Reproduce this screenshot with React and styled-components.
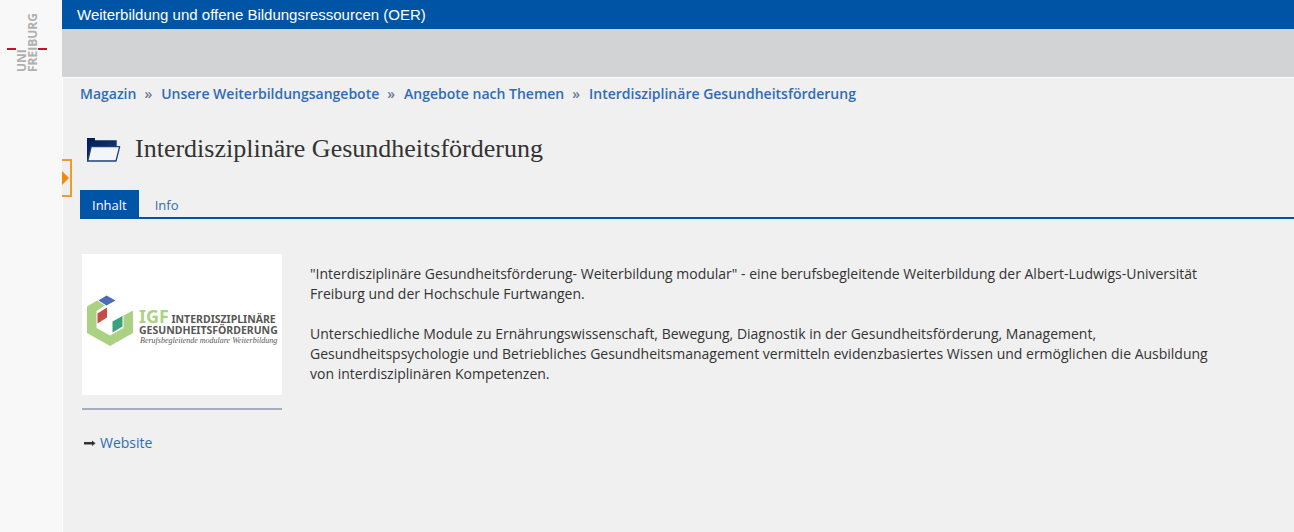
import React from "react";
import styled, { createGlobalStyle } from "styled-components";

const GlobalStyle = createGlobalStyle`
  *, *::before, *::after {
    box-sizing: border-box;
  }

  body {
    margin: 0;
    background: #f0f0f0;
    color: #333;
    font-family: "Open Sans", "Noto Sans", sans-serif;
    font-size: 14px;
    line-height: 20px;
  }
`;

const Page = styled.div`
  display: grid;
  grid-template-columns: 62px minmax(0, 1fr);
  min-height: 100vh;
`;

const Sidebar = styled.aside`
  display: flex;
  justify-content: center;
  align-items: flex-start;
  padding: 12px 6px 0 0;
  background: #f8f8f8;
`;

const TopBar = styled.header`
  padding: 5px 15px 4px;
  background: #0054a6;
  color: #fff;
  font-family: "Liberation Sans", Arial, sans-serif;
  font-size: 15px;
`;

const SubBar = styled.div`
  height: 49px;
  border-bottom: 1px solid #fff;
  background: #d1d3d4;
`;

const Main = styled.main`
  position: relative;
  flex: 1;
  padding: 6px 0 24px 17px;
  border-left: 1px solid #fff;
`;

const Content = styled.div`
  display: flex;
  flex-direction: column;
`;

const Link = styled.a`
  color: #2f6bb8;
  text-decoration: none;

  &:hover {
    text-decoration: underline;
  }
`;

const Breadcrumb = styled.ol`
  display: flex;
  flex-wrap: wrap;
  margin: 0;
  padding: 0;
  list-style: none;
  font-weight: 600;

  li + li::before {
    content: "»";
    padding: 0 9px 0 8px;
    color: #6b7a90;
  }
`;

const TitleRow = styled.div`
  display: flex;
  align-items: center;
  gap: 14px;
  padding: 29px 0 25px 6px;
`;

const Title = styled.h1`
  margin: 0;
  font-family: "Liberation Serif", "Times New Roman", serif;
  font-size: 26px;
  font-weight: 400;
  line-height: 32px;
`;

const Tabs = styled.nav`
  display: flex;
  gap: 4px;
  border-bottom: 2px solid #0054a6;
  font-size: 13px;
`;

const Tab = styled.a`
  padding: 5px 12px 2px;
  background: ${({ $active }) => ($active ? "#0054a6" : "transparent")};
  color: ${({ $active }) => ($active ? "#fff" : "#2f6bb8")};
  text-decoration: none;
`;

const Columns = styled.div`
  display: flex;
  align-items: flex-start;
  gap: 28px;
  padding: 35px 84px 0 2px;
`;

const SideColumn = styled.div`
  flex: 0 0 200px;
`;

const LogoCard = styled.div`
  display: flex;
  height: 141px;
  background: #fff;
`;

const Divider = styled.hr`
  height: 2px;
  margin: 13px 0 23px;
  border: 0;
  background: #a3b0c4;
`;

const WebsiteRow = styled.div`
  display: flex;
  align-items: center;
  gap: 4px;
  padding-left: 1px;
`;

const Text = styled.div`
  flex: 1;
  padding-top: 10px;

  p {
    margin: 0 0 20px;
  }
`;

const Opener = styled.button`
  position: absolute;
  top: 81px;
  left: -1px;
  display: flex;
  align-items: center;
  width: 10px;
  height: 38px;
  padding: 0;
  border: 2px solid #ef9a2d;
  border-left: 0;
  background: #efefef;
  cursor: pointer;
`;

const UniLogo = () => (
  <svg width="42" height="62" viewBox="0 0 42 62" role="img" aria-label="Uni Freiburg">
    <g
      fill="#b0b0b0"
      fontFamily="'Open Sans', sans-serif"
      fontWeight="700"
      fontSize="12"
    >
      <text transform="translate(19 60) rotate(-90)">UNI</text>
      <text transform="translate(30 60) rotate(-90)">FREIBURG</text>
    </g>
    <path d="M0 37h9M31 37h9" stroke="#c70e2c" strokeWidth="2" />
  </svg>
);

const FolderIcon = () => (
  <svg width="35" height="26" viewBox="0 0 35 26" aria-hidden="true">
    <defs>
      <linearGradient id="folder" x1="0" x2="1" y1="0" y2="1">
        <stop offset="0" stopColor="#001f52" />
        <stop offset="1" stopColor="#173f86" />
      </linearGradient>
    </defs>
    <path d="M1 2h8v2.300h21.700V11H6L2 25.500H1z" fill="url(#folder)" />
    <path
      d="M5.200 10.700H33.700L30 25H1.700z"
      fill="#f4f5f8"
      stroke="#1d3f7c"
      strokeWidth="1.300"
      strokeLinejoin="round"
    />
  </svg>
);

const IgfLogo = () => (
  <svg width="200" height="141" viewBox="0 0 400 282" role="img" aria-label="IGF Logo">
    <path
      d="M10 105L30 93L46 103L29 114V148L56 163L83 148V123L102 113V158L56 184L10 158Z"
      fill="#abd283"
    />
    <path d="M33 93L49 83L67 93L49 103Z" fill="#4d6cb5" />
    <path d="M31 119L50 107V127L31 139Z" fill="#c74a48" />
    <path d="M61 135L81 124V145L61 157Z" fill="#38a27a" />
    <g fontFamily="'Noto Sans', sans-serif" fontWeight="700" fill="#575756">
      <text x="114" y="137" fontSize="36" fill="#abd283">IGF</text>
      <text x="179" y="137" fontSize="21">INTERDISZIPLINÄRE</text>
      <text x="114" y="160" fontSize="21">GESUNDHEITSFÖRDERUNG</text>
    </g>
    <text
      x="116"
      y="178"
      fontFamily="'Liberation Serif', serif"
      fontStyle="italic"
      fontSize="16"
      fill="#575756"
    >
      Berufsbegleitende modulare Weiterbildung
    </text>
  </svg>
);

const ArrowIcon = () => (
  <svg width="13" height="8" viewBox="0 0 13 8" aria-hidden="true">
    <path d="M1 3h8V1.500l3.500 2.700L9 7V5.500H1z" fill="#333" />
  </svg>
);

const crumbs = [
  "Magazin",
  "Unsere Weiterbildungsangebote",
  "Angebote nach Themen",
  "Interdisziplinäre Gesundheitsförderung",
];

function App() {
  return (
    <>
      <GlobalStyle />
      <Page>
        <Sidebar>
          <UniLogo />
        </Sidebar>
        <Content>
          <TopBar>Weiterbildung und offene Bildungsressourcen (OER)</TopBar>
          <SubBar />
          <Main>
            <Opener type="button" aria-label="Navigation">
              <svg width="8" height="14" viewBox="0 0 8 14" aria-hidden="true">
                <path d="M0 0l7 7-7 7z" fill="#ee8a0c" />
              </svg>
            </Opener>
            <Breadcrumb>
              {crumbs.map((crumb) => (
                <li key={crumb}>
                  <Link href="#">{crumb}</Link>
                </li>
              ))}
            </Breadcrumb>
            <TitleRow>
              <FolderIcon />
              <Title>Interdisziplinäre Gesundheitsförderung</Title>
            </TitleRow>
            <Tabs>
              <Tab href="#" $active>
                Inhalt
              </Tab>
              <Tab href="#">Info</Tab>
            </Tabs>
            <Columns>
              <SideColumn>
                <LogoCard>
                  <IgfLogo />
                </LogoCard>
                <Divider />
                <WebsiteRow>
                  <ArrowIcon />
                  <Link href="#">Website</Link>
                </WebsiteRow>
              </SideColumn>
              <Text>
                <p>
                  "Interdisziplinäre Gesundheitsförderung- Weiterbildung modular" - eine
                  berufsbegleitende Weiterbildung der Albert-Ludwigs-Universität Freiburg und
                  der Hochschule Furtwangen.
                </p>
                <p>
                  Unterschiedliche Module zu Ernährungswissenschaft, Bewegung, Diagnostik in der
                  Gesundheitsförderung, Management, Gesundheitspsychologie und Betriebliches
                  Gesundheitsmanagement vermitteln evidenzbasiertes Wissen und ermöglichen die
                  Ausbildung von interdisziplinären Kompetenzen.
                </p>
              </Text>
            </Columns>
          </Main>
        </Content>
      </Page>
    </>
  );
}

export default App;
